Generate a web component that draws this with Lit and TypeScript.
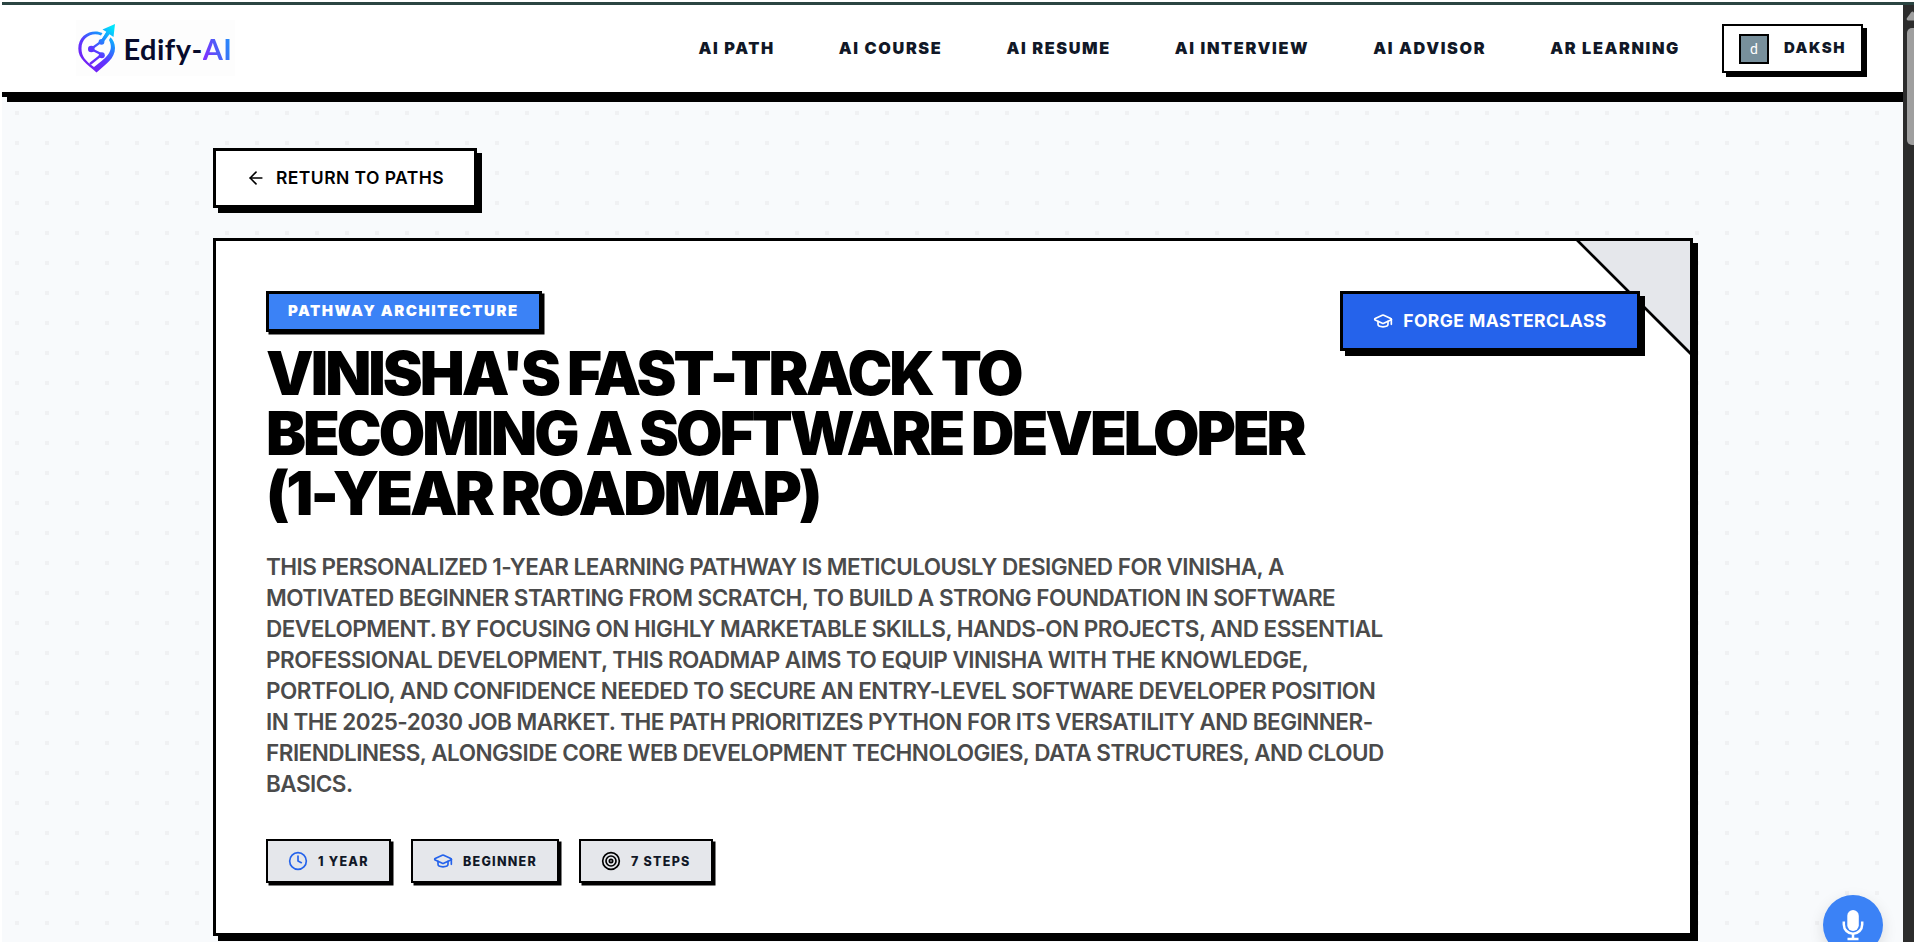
import { LitElement, html, css, svg } from "lit";
import { customElement, property } from "lit/decorators.js";

const shapes = {
  arrow: svg`<path d="m12 19-7-7 7-7"/><path d="M19 12H5"/>`,
  cap: svg`<path d="M21.42 10.922a1 1 0 0 0-.019-1.838L12.83 5.18a2 2 0 0 0-1.66 0L2.6 9.08a1 1 0 0 0 0 1.832l8.57 3.908a2 2 0 0 0 1.66 0z"/><path d="M22 10v6"/><path d="M6 12.5V16a6 3 0 0 0 12 0v-3.5"/>`,
  clock: svg`<circle cx="12" cy="12" r="10"/><path d="M12 6v6l4 2"/>`,
  target: svg`<circle cx="12" cy="12" r="10"/><circle cx="12" cy="12" r="6"/><circle cx="12" cy="12" r="2"/>`,
};

@customElement("line-icon")
export class LineIcon extends LitElement {
  @property() name: keyof typeof shapes = "arrow";
  static styles = css`
    :host { display: block; width: 20px; height: 20px; flex: none; }
    svg { display: block; width: 100%; height: 100%; }
  `;
  render() {
    return html`<svg viewBox="0 0 24 24" fill="none" stroke="currentColor" stroke-width="2" stroke-linecap="round" stroke-linejoin="round">${shapes[this.name]}</svg>`;
  }
}

@customElement("brand-logo")
export class BrandLogo extends LitElement {
  static styles = css`
    :host { display: flex; width: 159px; height: 56px; background: #fdfdfd; box-sizing: border-box; padding-left: 2px; }
    svg { width: 38px; height: 50px; margin-top: 3px; flex: none; }
    .word { margin-left: 7.5px; font: 700 29px/58px Lato, sans-serif; letter-spacing: 0.45px; color: #070b2c; white-space: nowrap; }
    .ai { background: linear-gradient(75deg, #7a35ff 15%, #3f6bf5 60%, #1a9bff); -webkit-background-clip: text; background-clip: text; color: transparent; }
  `;
  render() {
    return html`
      <svg viewBox="0 0 38 50" fill="none">
        <defs>
          <linearGradient id="g" x1="6" y1="40" x2="36" y2="6" gradientUnits="userSpaceOnUse">
            <stop offset="0" stop-color="#7420f5"/><stop offset=".35" stop-color="#5c36ff"/>
            <stop offset=".68" stop-color="#1c8cff"/><stop offset="1" stop-color="#00e5fb"/>
          </linearGradient>
        </defs>
        <path fill="url(#g)" d="M24.5 10C15 5.300 0.300 11 0.300 25.500C0.300 36 8.500 40.500 18.500 49.500C28 41 37 35.500 37 25C37 20.500 35 16.500 32.500 14.300L31 17C36 27 31 33 16 44C7.500 38 3.500 33.500 3.500 25.500C3.500 14 14.500 8.500 23 12.500Z"/>
        <path fill="url(#g)" d="M37 1L35.500 14L31.500 11.200L24.500 20.500L22.500 19L28.300 8.800L24.500 6.500Z"/>
        <path stroke="url(#g)" stroke-width="2.300" d="M30 9L23.500 18.500L13 26L24 31.500L12 41"/>
        <g fill="url(#g)"><circle cx="23.500" cy="18.800" r="2.900"/><circle cx="13.300" cy="26" r="3.300"/><circle cx="23.800" cy="32.300" r="3"/></g>
      </svg>
      <div class="word">Edify-<span class="ai">AI</span></div>`;
  }
}

@customElement("app-root")
export class AppRoot extends LitElement {
  static styles = css`
    :host { display: block; width: 1916px; height: 944px; box-sizing: border-box; padding: 2px; background: #fff; overflow: hidden; font-family: Inter, sans-serif; color: #000; }
    .window { height: 940px; box-sizing: border-box; border-top: 3px solid #2b4542; display: flex; overflow: hidden; position: relative; }
    .page { flex: 1; min-width: 0; overflow: hidden; background: conic-gradient(from 270deg at 4px 4px, #f0f1f3 90deg, transparent 0) 13px 16px / 30px 30px #f8fafc; }
    .scroll { width: 11px; flex: none; background: #2c2c2c; overflow: hidden; padding-top: 6px; box-sizing: border-box; }
    .scroll svg { display: block; width: 11px; height: 10px; }
    .thumb { margin: 7px 0 0 4px; width: 15px; height: 117px; border-radius: 5px; background: #9f9f9f; }
    nav { height: 92px; box-sizing: border-box; background: #fff; border-bottom: 5px solid #000; box-shadow: 5px 5px 0 #000; display: flex; align-items: center; padding: 0 40px 0 74px; }
    brand-logo { margin-bottom: 1px; }
    .links { margin: 0 42px 2px auto; display: flex; gap: 64px; font-weight: 900; font-size: 16.25px; line-height: 20px; letter-spacing: 1.625px; color: #111827; white-space: nowrap; }
    .user { width: 141px; height: 49px; box-sizing: border-box; border: 2px solid #000; box-shadow: 4px 4px 0 #000; background: #fff; display: flex; align-items: center; padding-left: 15px; gap: 15px; font-weight: 900; font-size: 15px; letter-spacing: 1.5px; color: #111827; }
    .user span, .btn span { padding-bottom: 2px; }
    .avatar { width: 30px; height: 30px; box-sizing: border-box; border: 2px solid #000; background: #78909c; color: #fff; font: 400 14px/26px Roboto, sans-serif; letter-spacing: 0; text-align: center; }
    main { width: 1480px; margin: 51px 0 0 211px; }
    .btn { height: 60px; box-sizing: border-box; border: 3px solid #000; box-shadow: 5px 5px 0 #000; display: flex; align-items: center; justify-content: center; gap: 10px; background: #fff; font-weight: 600; font-size: 17.5px; letter-spacing: 0.4375px; white-space: nowrap; }
    .return { width: 264px; margin-bottom: 30px; }
    .card { height: 698px; box-sizing: border-box; position: relative; background: #fff; border: 3px solid #000; box-shadow: 5px 5px 0 #000; padding: 50px; }
    .corner { position: absolute; right: 0; top: 0; width: 114px; height: 114px; display: block; }
    .head { display: flex; justify-content: space-between; align-items: flex-start; }
    .forge { width: 300px; background: #2563eb; color: #fff; font-weight: 700; position: relative; }
    .tag { width: 276px; height: 41px; box-sizing: border-box; border: 3px solid #000; box-shadow: 2.500px 2.500px 0 #000; background: #3b82f6; color: #fff; font-weight: 900; font-size: 15px; letter-spacing: 1.5px; line-height: 34px; padding-left: 19px; white-space: nowrap; }
    h1 { margin: 11px 0 0; font-weight: 900; font-size: 60px; line-height: 60px; letter-spacing: -3px; white-space: nowrap; }
    p { margin: 29px 0 0; font-weight: 600; font-size: 22.5px; line-height: 30.94px; letter-spacing: -0.5125px; color: #4b4b4b; white-space: nowrap; }
    .pills { display: flex; gap: 20px; margin-top: 39.5px; }
    .pill { height: 44px; box-sizing: border-box; border: 2px solid #000; box-shadow: 2.500px 2.500px 0 #000; background: #e5e7eb; display: flex; align-items: center; gap: 10px; padding-left: 20px; font-weight: 800; font-size: 12.5px; letter-spacing: 1.25px; color: #111827; white-space: nowrap; }
    .w1 { width: 125px; }
    .w2 { width: 148px; }
    .w3 { width: 134px; }
    .blue { color: #2563eb; }
    .black { color: #000; }
    .mic { position: absolute; left: 1821px; top: 890px; width: 60px; height: 60px; border-radius: 50%; background: #3b82f6; box-shadow: 0 5px 15px rgba(0,0,0,.12); }
    .mic svg { display: block; width: 60px; height: 60px; }
  `;

  links = ["AI PATH", "AI COURSE", "AI RESUME", "AI INTERVIEW", "AI ADVISOR", "AR LEARNING"];
  copy = [
    "THIS PERSONALIZED 1-YEAR LEARNING PATHWAY IS METICULOUSLY DESIGNED FOR VINISHA, A",
    "MOTIVATED BEGINNER STARTING FROM SCRATCH, TO BUILD A STRONG FOUNDATION IN SOFTWARE",
    "DEVELOPMENT. BY FOCUSING ON HIGHLY MARKETABLE SKILLS, HANDS-ON PROJECTS, AND ESSENTIAL",
    "PROFESSIONAL DEVELOPMENT, THIS ROADMAP AIMS TO EQUIP VINISHA WITH THE KNOWLEDGE,",
    "PORTFOLIO, AND CONFIDENCE NEEDED TO SECURE AN ENTRY-LEVEL SOFTWARE DEVELOPER POSITION",
    "IN THE 2025-2030 JOB MARKET. THE PATH PRIORITIZES PYTHON FOR ITS VERSATILITY AND BEGINNER-",
    "FRIENDLINESS, ALONGSIDE CORE WEB DEVELOPMENT TECHNOLOGIES, DATA STRUCTURES, AND CLOUD",
    "BASICS.",
  ];

  render() {
    return html`
      <div class="window">
        <div class="page">
          <nav>
            <brand-logo></brand-logo>
            <div class="links">${this.links.map((l) => html`<span>${l}</span>`)}</div>
            <div class="user"><div class="avatar">d</div><span>DAKSH</span></div>
          </nav>
          <main>
            <div class="btn return"><line-icon name="arrow"></line-icon><span>RETURN TO PATHS</span></div>
            <section class="card">
              <svg class="corner" viewBox="0 0 114 114"><path d="M2 0H114V112Z" fill="#e5e7eb"/><path d="M1 -1L115 113" stroke="#000" stroke-width="2.700"/></svg>
              <div class="head">
                <div>
                  <div class="tag">PATHWAY ARCHITECTURE</div>
                  <h1>VINISHA'S FAST-TRACK TO<br>BECOMING A SOFTWARE DEVELOPER<br>(1-YEAR ROADMAP)</h1>
                </div>
                <div class="btn forge"><line-icon name="cap"></line-icon><span>FORGE MASTERCLASS</span></div>
              </div>
              <p>${this.copy.map((l, i) => html`${i ? html`<br>` : ""}${l}`)}</p>
              <div class="pills">
                <div class="pill w1"><line-icon class="blue" name="clock"></line-icon><span>1 YEAR</span></div>
                <div class="pill w2"><line-icon class="blue" name="cap"></line-icon><span>BEGINNER</span></div>
                <div class="pill w3"><line-icon class="black" name="target"></line-icon><span>7 STEPS</span></div>
              </div>
            </section>
          </main>
        </div>
        <div class="scroll">
          <svg viewBox="0 0 11 10"><path d="M5 9.500Q3 9 4 7L8 1.500Q9.500 -.5 11 1.500V9.500Z" fill="#9f9f9f"/></svg>
          <div class="thumb"></div>
        </div>
        <div class="mic"><svg viewBox="0 0 60 60"><rect x="24.300" y="15" width="11.500" height="21" rx="5.750" fill="#fff"/><path d="M20.800 26.500V29.500A9.200 9.200 0 0 0 39.200 29.500V26.500M30 39V44M24.500 44H35.500" stroke="#fff" stroke-width="2.500" fill="none"/></svg></div>
      </div>`;
  }
}
